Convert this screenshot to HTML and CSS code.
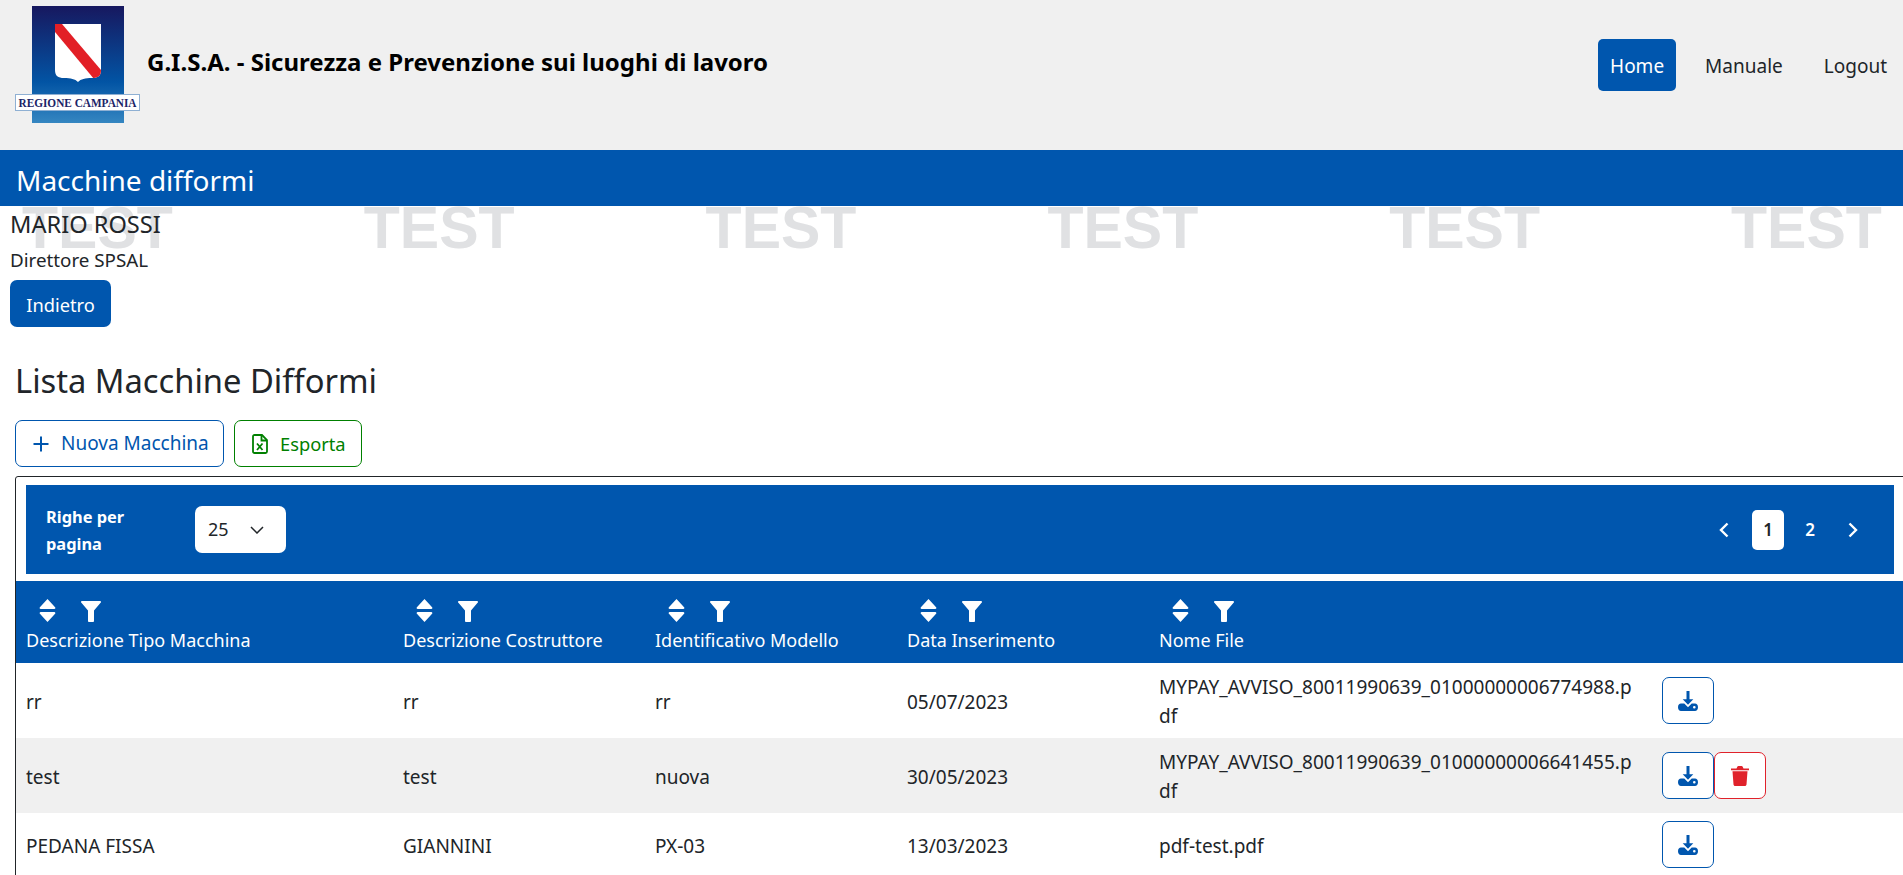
FILE: index.html
```html
<!DOCTYPE html>
<html lang="it">
<head>
    <meta charset="UTF-8">
    <title>G.I.S.A. - Macchine difformi</title>
    <link rel="stylesheet" href="styles.css">
</head>
<body>
    <!-- Shared icons -->
    <svg class="sprite" aria-hidden="true">
        <symbol id="i-sort" viewBox="0 0 17 23"><path d="M8.5 0l7.6 8.2c.6.7.2 1.8-.8 1.8H1.7c-1 0-1.4-1.100-.8-1.800zM8.500 23L.9 14.800C.3 14.100.7 13 1.700 13h13.600c1 0 1.400 1.100.8 1.800z"/></symbol>
        <symbol id="i-filter" viewBox="0 0 20 21"><path d="M.9 0h18.200c.8 0 1.200 1 .7 1.600L13 9.500V20c0 .8-.6 1-1.200 1H8.200C7.600 21 7 20.800 7 20V9.500L.2 1.600C-.3 1 .1 0 .9 0z"/></symbol>
        <symbol id="i-download" viewBox="0 0 20 20"><path d="M8.500 0h3v8.300h3.800L10 13.800 4.700 8.300h3.800z"/><path d="M3 12.500h3.300l3.700 3.700 3.700-3.700H17c1.700 0 3 1.300 3 3.700s-1.300 3.800-3 3.800H3c-1.700 0-3-1.400-3-3.800s1.300-3.700 3-3.700zm13.300 2.500a1.300 1.300 0 100 2.600 1.300 1.300 0 000-2.600z"/></symbol>
        <symbol id="i-trash" viewBox="0 0 18 20"><path d="M0 2.500h5.500L6.300.7C6.500.3 6.900 0 7.400 0h3.200c.5 0 .9.300 1.100.7l.8 1.800H18v1.700H0zM1.500 5.200h15l-1 13.300c-.1.900-.8 1.500-1.600 1.500H4.100c-.8 0-1.500-.6-1.600-1.500z"/></symbol>
    </svg>

    <!-- Top Header -->
    <header class="topbar">
        <div class="brand">
            <svg class="logo" viewBox="0 0 125 117" role="img" aria-label="Regione Campania">
                <defs>
                    <linearGradient id="logo-bg" x1="0" y1="0" x2="0" y2="1">
                        <stop offset="0" stop-color="#17185f"/>
                        <stop offset="0.65" stop-color="#0254a4"/>
                        <stop offset="1" stop-color="#3586c1"/>
                    </linearGradient>
                    <clipPath id="shield">
                        <path d="M40 18h46v46c0 6-3 8-9 8-7 0-11 1-14 4-3-3-7-4-14-4-6 0-9-2-9-8z"/>
                    </clipPath>
                </defs>
                <rect x="17" y="0" width="92" height="117" fill="url(#logo-bg)"/>
                <path d="M40 18h46v46c0 6-3 8-9 8-7 0-11 1-14 4-3-3-7-4-14-4-6 0-9-2-9-8z" fill="#fff"/>
                <path d="M40 18h7l39 46v9h-7L40 26z" fill="#e21f26" clip-path="url(#shield)"/>
                <rect x="0.500" y="88.500" width="124" height="16" fill="#fff" stroke="#8fb0d3"/>
                <text x="62.500" y="101" text-anchor="middle" class="logo-text" textLength="118" lengthAdjust="spacingAndGlyphs">REGIONE CAMPANIA</text>
            </svg>
            <h1 class="brand-title">G.I.S.A. - Sicurezza e Prevenzione sui luoghi di lavoro</h1>
        </div>
        <nav class="nav">
            <a class="nav-link active">Home</a>
            <a class="nav-link">Manuale</a>
            <a class="nav-link">Logout</a>
        </nav>
    </header>

    <!-- Page Title -->
    <div class="page-bar">Macchine difformi</div>

    <main class="content">
        <div class="watermark" aria-hidden="true">
            <span>TEST</span><span>TEST</span><span>TEST</span><span>TEST</span><span>TEST</span><span>TEST</span>
        </div>

        <div class="user">
            <div class="user-name">MARIO ROSSI</div>
            <div class="user-role">Direttore SPSAL</div>
            <button class="btn-back">Indietro</button>
        </div>

        <h2 class="list-title">Lista Macchine Difformi</h2>

        <div class="actions">
            <button class="btn btn-blue">
                <svg class="btn-icon" viewBox="0 0 16 16" fill="none" stroke="currentColor" stroke-width="2"><path d="M8 .5v15M.5 8h15"/></svg>
                Nuova Macchina
            </button>
            <button class="btn btn-green">
                <svg class="btn-icon" viewBox="0 0 16 20" fill="none" stroke="currentColor" stroke-width="1.800"><path d="M2.500 1h7.500l5 5v11.500c0 .8-.7 1.500-1.500 1.500h-11c-.8 0-1.500-.7-1.500-1.500v-15C1 1.700 1.700 1 2.500 1z"/><path d="M9.500 1v5.500H15M5 9.500l5.500 6.500M10.500 9.500L5 16"/></svg>
                Esporta
            </button>
        </div>

        <div class="grid-box">
            <div class="toolbar">
                <div class="per-page">
                    <span class="per-page-label">Righe per pagina</span>
                    <div class="select">
                        <span>25</span>
                        <svg class="select-arrow" viewBox="0 0 14 8" fill="none" stroke="currentColor" stroke-width="1.500"><path d="M1 1l6 6 6-6"/></svg>
                    </div>
                </div>
                <div class="pager">
                    <svg class="pager-arrow" viewBox="0 0 10 16" fill="none" stroke="currentColor" stroke-width="2.400"><path d="M8.500 1.500L2 8l6.500 6.500"/></svg>
                    <span class="page-num current">1</span>
                    <span class="page-num">2</span>
                    <svg class="pager-arrow" viewBox="0 0 10 16" fill="none" stroke="currentColor" stroke-width="2.400"><path d="M1.500 1.500L8 8l-6.500 6.500"/></svg>
                </div>
            </div>

            <table class="grid">
                <colgroup>
                    <col class="col-a"><col class="col-b"><col class="col-b"><col class="col-b"><col class="col-c"><col>
                </colgroup>
                <thead>
                    <tr>
                        <th><span class="th-icons"><svg class="sort"><use href="#i-sort"/></svg><svg class="filter"><use href="#i-filter"/></svg></span>Descrizione Tipo Macchina</th>
                        <th><span class="th-icons"><svg class="sort"><use href="#i-sort"/></svg><svg class="filter"><use href="#i-filter"/></svg></span>Descrizione Costruttore</th>
                        <th><span class="th-icons"><svg class="sort"><use href="#i-sort"/></svg><svg class="filter"><use href="#i-filter"/></svg></span>Identificativo Modello</th>
                        <th><span class="th-icons"><svg class="sort"><use href="#i-sort"/></svg><svg class="filter"><use href="#i-filter"/></svg></span>Data Inserimento</th>
                        <th><span class="th-icons"><svg class="sort"><use href="#i-sort"/></svg><svg class="filter"><use href="#i-filter"/></svg></span>Nome File</th>
                        <th></th>
                    </tr>
                </thead>
                <tbody>
                    <tr>
                        <td>rr</td>
                        <td>rr</td>
                        <td>rr</td>
                        <td>05/07/2023</td>
                        <td>MYPAY_AVVISO_80011990639_01000000006774988.pdf</td>
                        <td class="cell-btns">
                            <button class="icon-btn"><svg><use href="#i-download"/></svg></button>
                        </td>
                    </tr>
                    <tr class="alt">
                        <td>test</td>
                        <td>test</td>
                        <td>nuova</td>
                        <td>30/05/2023</td>
                        <td>MYPAY_AVVISO_80011990639_01000000006641455.pdf</td>
                        <td class="cell-btns">
                            <button class="icon-btn"><svg><use href="#i-download"/></svg></button>
                            <button class="icon-btn danger"><svg class="trash"><use href="#i-trash"/></svg></button>
                        </td>
                    </tr>
                    <tr class="short">
                        <td>PEDANA FISSA</td>
                        <td>GIANNINI</td>
                        <td>PX-03</td>
                        <td>13/03/2023</td>
                        <td>pdf-test.pdf</td>
                        <td class="cell-btns">
                            <button class="icon-btn"><svg><use href="#i-download"/></svg></button>
                        </td>
                    </tr>
                </tbody>
            </table>
        </div>
    </main>
</body>
</html>
```

FILE: styles.css
```css
/* General */
html, body {
    height: 875px;
    overflow: hidden;
}

body {
    margin: 0;
    background: #fff;
    color: #212529;
    font-family: "Noto Sans", sans-serif;
    font-size: 19px;
    line-height: 29px;
}

.sprite {
    display: none;
}

/* Header */
.topbar {
    height: 150px;
    background: #f0f0f0;
    display: flex;
    justify-content: space-between;
    box-sizing: border-box;
    padding: 6px 4px 0 15px;
}

.brand {
    display: flex;
    align-items: flex-start;
}

.logo {
    width: 125px;
    height: 117px;
}

.logo-text {
    font-family: "Liberation Serif", serif;
    font-weight: 700;
    font-size: 12.500px;
    fill: #1b2467;
}

.brand-title {
    margin: 39px 0 0 7px;
    font-size: 24px;
    line-height: 34px;
    font-weight: 700;
    color: #000;
}

.nav {
    display: flex;
    align-items: flex-start;
    padding-top: 33px;
}

.nav-link {
    height: 52px;
    line-height: 55px;
    padding: 0 12px;
    margin-left: 17px;
    border-radius: 5px;
    box-sizing: border-box;
}

.nav-link.active {
    background: #0056ae;
    color: #fff;
}

/* Page title bar */
.page-bar {
    position: relative;
    z-index: 1;
    height: 56px;
    background: #0056ae;
    color: #fff;
    font-size: 28px;
    line-height: 60px;
    padding-left: 16px;
}

/* Content */
.content {
    position: relative;
    padding: 0 0 0 10px;
}

.watermark {
    position: absolute;
    top: -3px;
    left: 22px;
    display: flex;
    gap: 191px;
    font-family: "Liberation Sans", sans-serif;
    font-weight: 700;
    font-size: 59px;
    line-height: 50px;
    color: #e0e1e3;
}

.user {
    position: relative;
}

.user-name {
    font-size: 23.600px;
    line-height: 34px;
    padding-top: 1px;
}

.user-role {
    font-size: 18.800px;
    line-height: 30px;
    margin-top: 4px;
}

.btn-back {
    display: block;
    margin-top: 5px;
    width: 101px;
    height: 47px;
    padding: 2px 0 0;
    background: #0056ae;
    border: 0;
    border-radius: 7px;
    color: #fff;
    font: inherit;
    font-size: 18.300px;
}

.list-title {
    margin: 32px 0 0 5px;
    font-size: 32.700px;
    line-height: 44px;
    font-weight: 400;
}

/* Action buttons */
.actions {
    display: flex;
    gap: 10px;
    margin: 17px 0 0 5px;
}

.btn {
    height: 47px;
    display: flex;
    align-items: center;
    padding: 0 15px;
    background: #fff;
    border: 1px solid;
    border-radius: 7px;
    font: inherit;
    white-space: nowrap;
}

.btn-blue {
    width: 209px;
    color: #0056ae;
    border-color: #0056ae;
    padding-left: 17px;
}

.btn-green {
    width: 128px;
    color: #008000;
    border-color: #008000;
    padding-left: 17px;
    font-size: 18.300px;
}

.btn-icon {
    width: 16px;
    height: 20px;
    margin-right: 12px;
    flex: none;
}

/* Table box */
.grid-box {
    width: 1890px;
    margin: 9px 0 0 5px;
    padding: 8px 0 0;
    border: 1px solid #212529;
    border-radius: 3px 0 0 0;
    box-sizing: border-box;
}

.toolbar {
    height: 89px;
    margin: 0 10px;
    background: #0056ae;
    color: #fff;
    display: flex;
    align-items: center;
    justify-content: space-between;
    padding: 0 36px 0 20px;
}

.per-page {
    display: flex;
    align-items: center;
}

.per-page-label {
    width: 100px;
    margin-right: 49px;
    font-size: 16.400px;
    line-height: 27px;
    font-weight: 700;
}

.select {
    width: 91px;
    height: 47px;
    box-sizing: border-box;
    padding: 0 22px 0 13px;
    background: #fff;
    border-radius: 7px;
    color: #212529;
    font-size: 18px;
    display: flex;
    align-items: center;
    justify-content: space-between;
}

.select-arrow {
    width: 14px;
    height: 8px;
}

.pager {
    display: flex;
    align-items: center;
    font-size: 17px;
    font-weight: 600;
}

.pager-arrow {
    width: 10px;
    height: 16px;
}

.page-num {
    width: 32px;
    height: 40px;
    line-height: 40px;
    text-align: center;
    border-radius: 5px;
    margin-left: 10px;
}

.page-num.current {
    margin-left: 23px;
    background: #fff;
    color: #212529;
}

.page-num + .pager-arrow {
    margin-left: 22px;
}

/* Table */
.grid {
    width: 100%;
    margin-top: 7px;
    border-collapse: collapse;
    table-layout: fixed;
}

.col-a {
    width: 377px;
}

.col-b {
    width: 252px;
}

.col-c {
    width: 503px;
}

.grid th {
    height: 82px;
    box-sizing: border-box;
    padding: 17px 10px 0;
    vertical-align: top;
    text-align: left;
    background: #0056ae;
    color: #fff;
    font-weight: 400;
    font-size: 18px;
    line-height: 29px;
    white-space: nowrap;
}

.th-icons {
    display: flex;
    align-items: flex-start;
    height: 27px;
    padding-left: 13px;
    margin-top: 1px;
}

.sort {
    width: 17px;
    height: 23px;
    fill: #fff;
}

.filter {
    width: 20px;
    height: 21px;
    margin: 2px 0 0 25px;
    fill: #fff;
}

.grid td {
    height: 75px;
    box-sizing: border-box;
    padding: 3px 15px 0 10px;
    overflow-wrap: anywhere;
    vertical-align: middle;
}

.grid tr.alt td {
    background: #f0f0f0;
}

/* Single-height last row: text and button sit from the top */
.grid tr.short td {
    vertical-align: top;
    padding-top: 19px;
}

.grid td.cell-btns {
    padding: 0 0 0 10px;
}

.grid tr.short td.cell-btns {
    padding-top: 8px;
}

.cell-btns {
    font-size: 0;
}

.icon-btn {
    width: 52px;
    height: 47px;
    padding: 0;
    background: #fff;
    border: 1px solid #0056ae;
    border-radius: 7px;
    color: #0056ae;
    vertical-align: middle;
    box-sizing: border-box;
}

.icon-btn svg {
    width: 20px;
    height: 20px;
    fill: currentColor;
    display: block;
    margin: auto;
}

.icon-btn .trash {
    width: 18px;
}

.icon-btn.danger {
    border-color: #e0222b;
    color: #e0222b;
}
```
